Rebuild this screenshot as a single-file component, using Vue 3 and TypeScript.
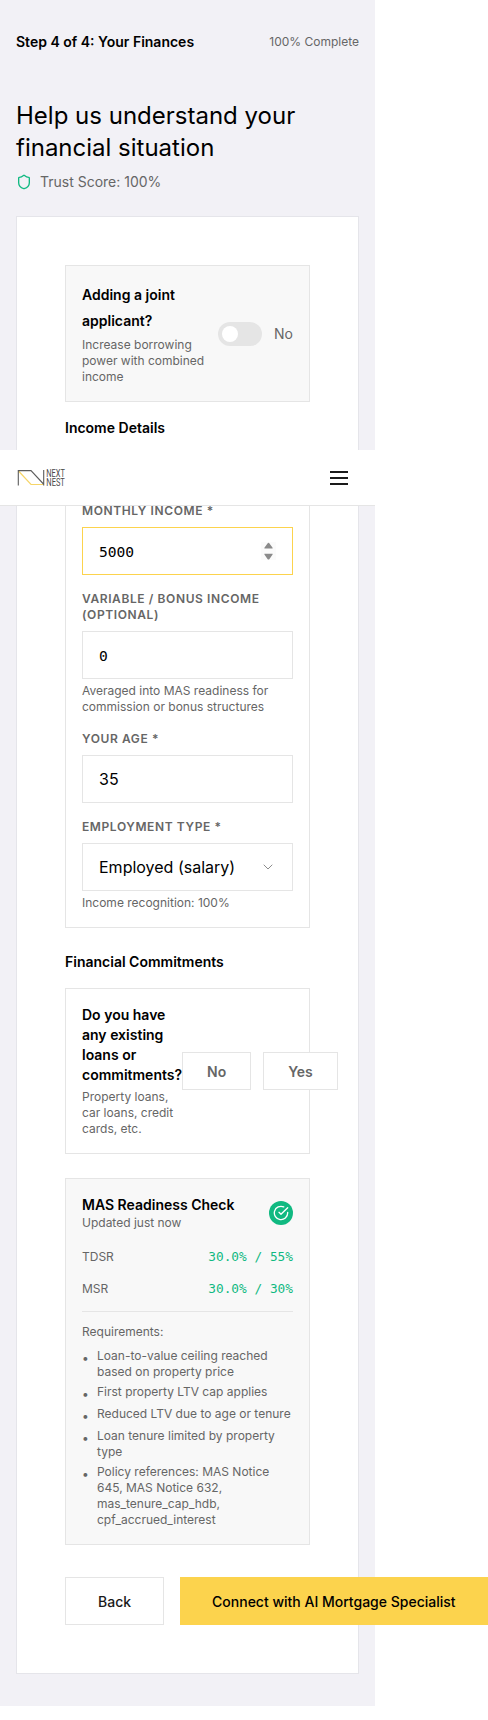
<script setup lang="ts">
interface Ratio {
  label: string
  value: string
}

const ratios: Ratio[] = [
  { label: 'TDSR', value: '30.0% / 55%' },
  { label: 'MSR', value: '30.0% / 30%' },
]

const requirements: string[] = [
  'Loan-to-value ceiling reached based on property price',
  'First property LTV cap applies',
  'Reduced LTV due to age or tenure',
  'Loan tenure limited by property type',
  'Policy references: MAS Notice 645, MAS Notice 632, mas_tenure_cap_hdb, cpf_accrued_interest',
]
</script>

<template>
  <div class="page">
    <header class="nav">
      <svg class="logo" width="54" height="25" viewBox="0 0 54 25" fill="none">
        <path d="M2.500 6 L15 19.500 H27" stroke="#f6d568" stroke-width="1.2" />
        <path d="M2.300 20.500 V5.600 H15 L27.500 19 M27.700 5 V20.500" stroke="#5c5c5c" stroke-width="1.100" />
        <g fill="#4a4a4a" font-family="Roboto, sans-serif" font-size="10">
          <text x="30.300" y="12.300" textLength="18.500" lengthAdjust="spacingAndGlyphs">NEXT</text>
          <text x="30.300" y="20.500" textLength="18.500" lengthAdjust="spacingAndGlyphs">NEST</text>
        </g>
      </svg>
      <svg class="burger" width="24" height="24" viewBox="0 0 24 24" stroke="#1a1a1a" stroke-width="2">
        <path d="M3 6h18M3 12h18M3 18h18" />
      </svg>
    </header>

    <div class="progress">
      <span class="strong">Step 4 of 4: Your Finances</span>
      <span class="small">100% Complete</span>
    </div>

    <h1>Help us understand your financial situation</h1>
    <div class="trust">
      <svg width="16" height="16" viewBox="0 0 24 24" fill="none" stroke="#10b981" stroke-width="2" stroke-linecap="round" stroke-linejoin="round">
        <path d="M20 13c0 5-3.5 7.5-7.66 8.95a1 1 0 0 1-.67-.01C7.5 20.5 4 18 4 13V6a1 1 0 0 1 1-1c2 0 4.500-1.200 6.240-2.720a1.170 1.170 0 0 1 1.520 0C14.510 3.810 17 5 19 5a1 1 0 0 1 1 1z" />
      </svg>
      <span>Trust Score: 100%</span>
    </div>

    <main class="card">
      <section class="box tinted joint">
        <div class="joint-copy">
          <div class="strong joint-title">Adding a joint applicant?</div>
          <p class="small">Increase borrowing power with combined income</p>
        </div>
        <div class="switch-group">
          <span class="switch"><span class="knob"></span></span>
          <span class="switch-label">No</span>
        </div>
      </section>

      <h2 class="strong income-heading">Income Details</h2>
      <section class="box income">
        <div class="field">
          <div class="label">Monthly Income *</div>
          <div class="input mono active">
            <span>5000</span>
            <svg class="spinner" width="15" height="18" viewBox="0 0 15 18">
              <rect width="15" height="18" fill="#fbfbfb" />
              <path d="M3.400 6.600V5.800L6.500 1.400Q7.500 .2 8.500 1.400L11.600 5.800V6.600ZM3.400 11.800V12.600L6.500 17Q7.500 18.200 8.500 17L11.600 12.600V11.800Z" fill="#8a8a8a" />
            </svg>
          </div>
        </div>
        <div class="field">
          <div class="label">Variable / Bonus Income (Optional)</div>
          <div class="input mono"><span>0</span></div>
          <p class="small">Averaged into MAS readiness for commission or bonus structures</p>
        </div>
        <div class="field">
          <div class="label">Your Age *</div>
          <div class="input">35</div>
        </div>
        <div class="field">
          <div class="label">Employment Type *</div>
          <div class="input">
            <span>Employed (salary)</span>
            <svg width="16" height="16" viewBox="0 0 24 24" fill="none" stroke="#8c8c8c" stroke-width="1.500" stroke-linecap="round" stroke-linejoin="round">
              <path d="m6 9 6 6 6-6" />
            </svg>
          </div>
          <p class="small">Income recognition: 100%</p>
        </div>
      </section>

      <h2 class="strong commit-heading">Financial Commitments</h2>
      <section class="box commitments">
        <div class="commit-copy">
          <div class="strong">Do you have any existing loans or commitments?</div>
          <p class="small">Property loans, car loans, credit cards, etc.</p>
        </div>
        <div class="choices">
          <button class="choice">No</button>
          <button class="choice">Yes</button>
        </div>
      </section>

      <section class="box tinted readiness">
        <div class="readiness-head">
          <div>
            <div class="strong">MAS Readiness Check</div>
            <div class="small">Updated just now</div>
          </div>
          <span class="badge">
            <svg width="16" height="16" viewBox="0 0 24 24" fill="none" stroke="#fff" stroke-width="2" stroke-linecap="round" stroke-linejoin="round">
              <path d="M22 11.080V12a10 10 0 1 1-5.930-9.140" />
              <path d="m9 11 3 3L22 4" />
            </svg>
          </span>
        </div>
        <div v-for="r in ratios" :key="r.label" class="ratio">
          <span class="small">{{ r.label }}</span>
          <span class="ratio-value">{{ r.value }}</span>
        </div>
        <div class="requirements">
          <div class="small">Requirements:</div>
          <ul>
            <li v-for="item in requirements" :key="item" class="small">
              <span class="dot">•</span>
              <span>{{ item }}</span>
            </li>
          </ul>
        </div>
      </section>

      <div class="actions">
        <button class="action back">Back</button>
        <button class="action connect">Connect with AI Mortgage Specialist</button>
      </div>
    </main>
  </div>
</template>

<style>
html,
body {
  background: #fff;
  overflow-x: hidden;
}
</style>

<style scoped>
* {
  box-sizing: border-box;
}

.page {
  position: relative;
  width: 375px;
  height: 1706px;
  padding: 32px 16px;
  background: #f2f1f6;
  color: #000;
  font-family: Inter, sans-serif;
  font-size: 14px;
  line-height: 20px;
}

h1,
h2,
p,
ul {
  margin: 0;
  padding: 0;
}

.strong {
  font-size: 14px;
  font-weight: 600;
  line-height: 20px;
}

.small {
  color: #666;
  font-size: 12px;
  line-height: 16px;
}

.nav {
  position: absolute;
  top: 450px;
  left: 0;
  z-index: 2;
  display: flex;
  align-items: center;
  justify-content: space-between;
  width: 375px;
  height: 56px;
  padding: 0 24px 0 16px;
  border-bottom: 1px solid #e5e5e5;
  background: #fff;
}

.burger {
  margin-top: 1px;
}

.progress {
  display: flex;
  align-items: center;
  justify-content: space-between;
  height: 20px;
}

h1 {
  margin-top: 48px;
  font-size: 24px;
  font-weight: 400;
  line-height: 32px;
}

.trust {
  display: flex;
  align-items: center;
  gap: 8px;
  height: 20px;
  margin-top: 8px;
  color: #666;
}

.card {
  height: 1458px;
  margin-top: 24px;
  padding: 48px;
  border: 1px solid #e5e5ea;
  background: #fff;
}

.box {
  padding: 16px;
  border: 1px solid #e5e5e5;
}

.tinted {
  background: #f8f8f8;
}

.joint {
  display: flex;
  align-items: center;
  justify-content: space-between;
}

.joint-title {
  margin-bottom: 4px;
  line-height: 25.5px;
}

.joint-copy {
  width: 124px;
}

.switch-group {
  display: flex;
  align-items: center;
  gap: 12px;
  color: #666;
}

.switch {
  width: 44px;
  height: 24px;
  padding: 4px;
  border-radius: 12px;
  background: #e5e5e5;
}

.knob {
  display: block;
  width: 16px;
  height: 16px;
  border-radius: 50%;
  background: #fff;
}

.income-heading {
  margin: 16px 0 48px;
}

.income {
  display: grid;
  gap: 16px;
}

.field p {
  margin-top: 4px;
}

.label {
  margin-bottom: 8px;
  color: #666;
  font-size: 12px;
  font-weight: 600;
  letter-spacing: 0.6px;
  line-height: 16px;
  text-transform: uppercase;
}

.input {
  display: flex;
  align-items: center;
  justify-content: space-between;
  height: 48px;
  padding: 0 16px;
  border: 1px solid #e5e5e5;
  background: #fff;
  font-size: 16px;
}

.mono {
  font-family: "DejaVu Sans Mono", monospace;
  font-size: 14.6px;
}

.mono span {
  padding-top: 2px;
}

.active {
  border-color: #fcd34d;
}

.commit-heading {
  margin: 24px 0 16px;
}

.commitments {
  display: flex;
  align-items: center;
}

.commit-copy {
  flex: 0 0 100px;
  width: 100px;
}

.commit-copy p {
  width: 96px;
  margin-top: 4px;
}

.choices {
  display: flex;
  gap: 12px;
}

button {
  flex: none;
  padding: 0;
  border: 1px solid #e5e5e5;
  background: #fff;
  font-family: inherit;
  font-size: 14px;
  white-space: nowrap;
}

.choice {
  height: 38px;
  padding: 0 24px;
  color: #666;
  font-weight: 600;
}

.readiness {
  margin-top: 24px;
}

.readiness-head {
  display: flex;
  align-items: center;
  justify-content: space-between;
  margin-bottom: 16px;
}

.badge {
  display: grid;
  place-items: center;
  width: 24px;
  height: 24px;
  border-radius: 50%;
  background: #10b981;
}

.ratio {
  display: flex;
  align-items: center;
  justify-content: space-between;
  height: 20px;
  margin-bottom: 12px;
}

.ratio-value {
  color: #10b981;
  font-family: "DejaVu Sans Mono", monospace;
  font-size: 12.8px;
}

.requirements {
  padding-top: 12px;
  border-top: 1px solid #e5e5e5;
}

ul {
  display: grid;
  gap: 4px;
  margin-top: 8px;
  list-style: none;
}

li {
  display: flex;
  align-items: flex-start;
  gap: 8px;
}

.dot {
  flex: none;
  width: 7px;
  margin-top: 2px;
}

.actions {
  display: flex;
  gap: 16px;
  margin-top: 32px;
}

.action {
  height: 48px;
  padding: 0 32px;
  color: #1a1a1a;
  font-weight: 500;
}

.connect {
  border: 0;
  background: #fcd34d;
  color: #000;
}
</style>
